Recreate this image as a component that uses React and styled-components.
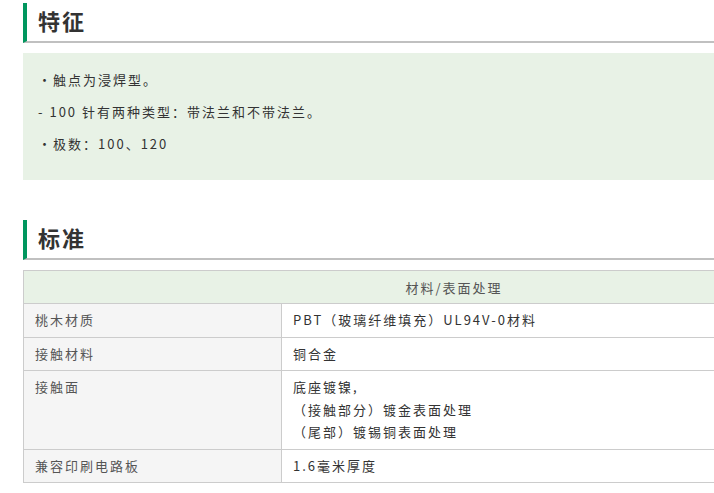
import React from "react";
import styled, { createGlobalStyle } from "styled-components";

const Global = createGlobalStyle`
  html, body { margin: 0; padding: 0; background: #fff; overflow: hidden; }
  body { font-family: "Noto Sans CJK SC", "Noto Sans", sans-serif; color: #333; }
`;

const Page = styled.div`
  padding: 3px 0 0 23px;
  width: 1000px;
`;

const Heading = styled.h2`
  margin: 0;
  width: 691px;
  height: 38px;
  border-left: 4px solid #00965e;
  border-bottom: 2px solid #c0c0c0;
  padding-left: 11px;
  font-size: 22px;
  font-weight: 700;
  letter-spacing: 2px;
  line-height: 35px;
  color: #333;
  margin-top: ${(p) => p.$top || 0}px;
`;

const Features = styled.ul`
  list-style: none;
  margin: 10px 0 0;
  width: 691px;
  box-sizing: border-box;
  padding: 11px 0 20px 15px;
  background: #e8f2e6;
`;

const Item = styled.li`
  font-size: 13px;
  line-height: 32px;
  height: 32px;
  letter-spacing: 2px;
  color: #333;
`;

const Table = styled.table`
  margin-top: 10px;
  width: 862px;
  border-collapse: collapse;
  font-size: 13px;
  letter-spacing: 2px;
`;

const Th = styled.th`
  background: #e8f2e6;
  border: 1px solid #ccc;
  height: 32px;
  font-weight: 400;
  color: #555;
  padding: 0;
  text-align: center;
`;

const Td = styled.td`
  border: 1px solid #ccc;
  padding: 5px 11px;
  line-height: 22.5px;
  vertical-align: top;
  text-align: left;
  background: ${(p) => (p.$label ? "#f5f5f5" : "#fff")};
  color: ${(p) => (p.$label ? "#555" : "#333")};
  width: ${(p) => (p.$label ? "235px" : "auto")};
`;

const rows = [
  ["桃木材质", ["PBT（玻璃纤维填充）UL94V-0材料"]],
  ["接触材料", ["铜合金"]],
  ["接触面", ["底座镀镍,", "（接触部分）镀金表面处理", "（尾部）镀锡铜表面处理"]],
  ["兼容印刷电路板", ["1.6毫米厚度"]],
];

export default function App() {
  return (
    <Page>
      <Global />
      <Heading>特征</Heading>
      <Features>
        <Item>・触点为浸焊型。</Item>
        <Item>- 100 针有两种类型：带法兰和不带法兰。</Item>
        <Item>・极数：100、120</Item>
      </Features>
      <Heading $top={40}>标准</Heading>
      <Table>
        <thead>
          <tr>
            <Th colSpan={2}>材料/表面处理</Th>
          </tr>
        </thead>
        <tbody>
          {rows.map(([label, lines]) => (
            <tr key={label}>
              <Td $label>{label}</Td>
              <Td>
                {lines.map((l, i) => (
                  <div key={i}>{l}</div>
                ))}
              </Td>
            </tr>
          ))}
        </tbody>
      </Table>
    </Page>
  );
}
